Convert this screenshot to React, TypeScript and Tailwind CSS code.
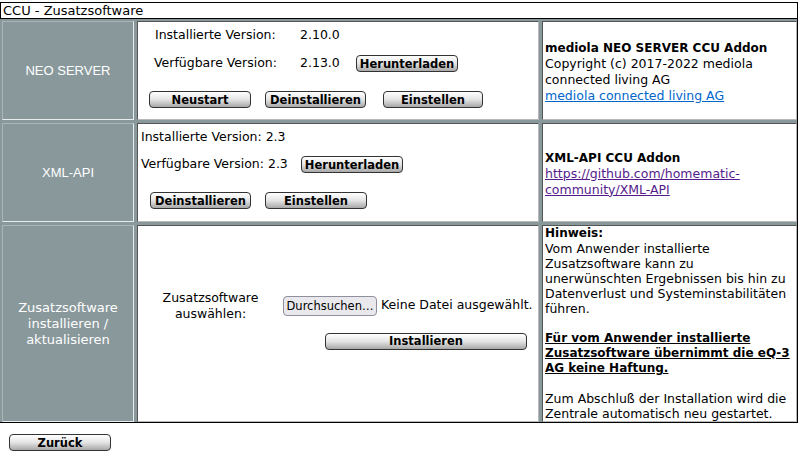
import React from 'react';

const font = { fontFamily: '"DejaVu Sans", Verdana, sans-serif' };

// Grey WebUI push button
const Btn = ({ label, className = '' }: { label: string; className?: string }) => (
  <button
    type="button"
    className={`h-[17px] rounded-[4px] border border-[#333] bg-gradient-to-b from-white via-[#e4e4e4] to-[#a8a8a8] text-[11.5px] font-bold leading-[14px] text-black ${className}`}
  >
    {label}
  </button>
);

const LabelCell = ({ children, className = '' }: { children: React.ReactNode; className?: string }) => (
  <div
    className={`flex items-center justify-center border border-t-[#a9b5b6] border-l-[#a9b5b6] border-r-[#e8eded] border-b-[#e8eded] bg-[#89989b] text-center text-[13px] text-white ${className}`}
  >
    {children}
  </div>
);

const Cell = ({ children, className = '' }: { children: React.ReactNode; className?: string }) => (
  <div
    className={`border border-t-[#555] border-l-[#555] border-r-[#b8b8b8] border-b-[#b8b8b8] bg-white text-[12.5px] text-black ${className}`}
  >
    {children}
  </div>
);

export default function App() {
  return (
    <div className="h-[459px] w-[801px] overflow-hidden bg-white pt-[2px]" style={font}>
      <div className="w-[798px]">
        {/* title */}
        <div className="h-[17px] border border-black px-[2px] text-[13px] leading-[15px] text-black">
          CCU - Zusatzsoftware
        </div>

        {/* addon table */}
        <div className="grid grid-cols-[132px_402px_255px] grid-rows-[99px_99px_197px] gap-x-[3px] gap-y-[3px] border-r border-b border-black bg-[#89989b] px-[2px] pt-[2px]">
          {/* NEO SERVER */}
          <LabelCell>
            <span style={{ fontFamily: '"Liberation Sans", Arial, sans-serif' }}>NEO SERVER</span>
          </LabelCell>
          <Cell className="pt-[5px]">
            <div className="flex h-[16px] items-center">
              <span className="ml-[17px] w-[145px]">Installierte Version:</span>
              <span>2.10.0</span>
            </div>
            <div className="mt-[12px] flex h-[17px] items-center">
              <span className="ml-[16px] w-[146px]">Verfügbare Version:</span>
              <span className="w-[56px]">2.13.0</span>
              <Btn label="Herunterladen" className="w-[102px]" />
            </div>
            <div className="mt-[19px] flex h-[17px] items-center">
              <Btn label="Neustart" className="ml-[11px] w-[102px]" />
              <Btn label="Deinstallieren" className="ml-[14px] w-[101px]" />
              <Btn label="Einstellen" className="ml-[17px] w-[100px]" />
            </div>
          </Cell>
          <Cell className="flex flex-col justify-center px-[2px] pt-[2px] leading-[16px]">
            <b className="text-[12px]">mediola NEO SERVER CCU Addon</b>
            <span>
              Copyright (c) 2017-2022 mediola
              <br />
              connected living AG
            </span>
            <a href="#" className="text-[#0066cc] underline">
              mediola connected living AG
            </a>
          </Cell>

          {/* XML-API */}
          <LabelCell>
            <span style={{ fontFamily: '"Liberation Sans", Arial, sans-serif' }}>XML-API</span>
          </LabelCell>
          <Cell className="pt-[5px]">
            <div className="flex h-[16px] items-center pl-[3px]">Installierte Version: 2.3</div>
            <div className="mt-[11px] flex h-[17px] items-center pl-[3px]">
              <span className="w-[160px]">Verfügbare Version: 2.3</span>
              <Btn label="Herunterladen" className="w-[102px]" />
            </div>
            <div className="mt-[19px] flex h-[17px] items-center">
              <Btn label="Deinstallieren" className="ml-[12px] w-[101px]" />
              <Btn label="Einstellen" className="ml-[14px] w-[102px]" />
            </div>
          </Cell>
          <Cell className="flex flex-col justify-center px-[2px] pt-[2px] leading-[16px]">
            <b className="text-[12px]">XML-API CCU Addon</b>
            <a href="#" className="text-[#551a8b] underline">
              https://github.com/homematic-
              <br />
              community/XML-API
            </a>
          </Cell>

          {/* Zusatzsoftware installieren */}
          <LabelCell className="leading-[16px]">
            <span>
              Zusatzsoftware
              <br />
              installieren /
              <br />
              aktualisieren
            </span>
          </LabelCell>
          <Cell className="flex flex-col justify-center pb-[8px]">
            <div className="flex items-center">
              <div className="w-[145px] text-center leading-[16px]">
                Zusatzsoftware
                <br />
                auswählen:
              </div>
              <button
                type="button"
                className="h-[20px] w-[94px] rounded-[4px] border border-[#8f8f9d] bg-[#e9e9ed] text-[11.5px] leading-[16px] text-black"
              >
                Durchsuchen…
              </button>
              <span className="ml-[4px] whitespace-nowrap">Keine Datei ausgewählt.</span>
            </div>
            <div className="mt-[11px] flex">
              <Btn label="Installieren" className="ml-[187px] w-[202px]" />
            </div>
          </Cell>
          <Cell className="whitespace-nowrap px-[2px] leading-[15px]">
            <div className="h-[15px] text-[12px] font-bold">Hinweis:</div>
            <div className="h-[15px]">Vom Anwender installierte</div>
            <div className="h-[15px]">Zusatzsoftware kann zu</div>
            <div className="h-[15px]">unerwünschten Ergebnissen bis hin zu</div>
            <div className="h-[15px]">Datenverlust und Systeminstabilitäten</div>
            <div className="h-[15px]">führen.</div>
            <div className="mt-[15px] text-[12px] font-bold underline">
              <div className="h-[15px]">Für vom Anwender installierte</div>
              <div className="h-[15px]">Zusatzsoftware übernimmt die eQ-3</div>
              <div className="h-[15px]">AG keine Haftung.</div>
            </div>
            <div className="mt-[15px] h-[15px]">Zum Abschluß der Installation wird die</div>
            <div className="h-[15px]">Zentrale automatisch neu gestartet.</div>
          </Cell>
        </div>

        {/* back */}
        <div className="flex pt-[11px] pl-[9px]">
          <Btn label="Zurück" className="w-[102px]" />
        </div>
      </div>
    </div>
  );
}
